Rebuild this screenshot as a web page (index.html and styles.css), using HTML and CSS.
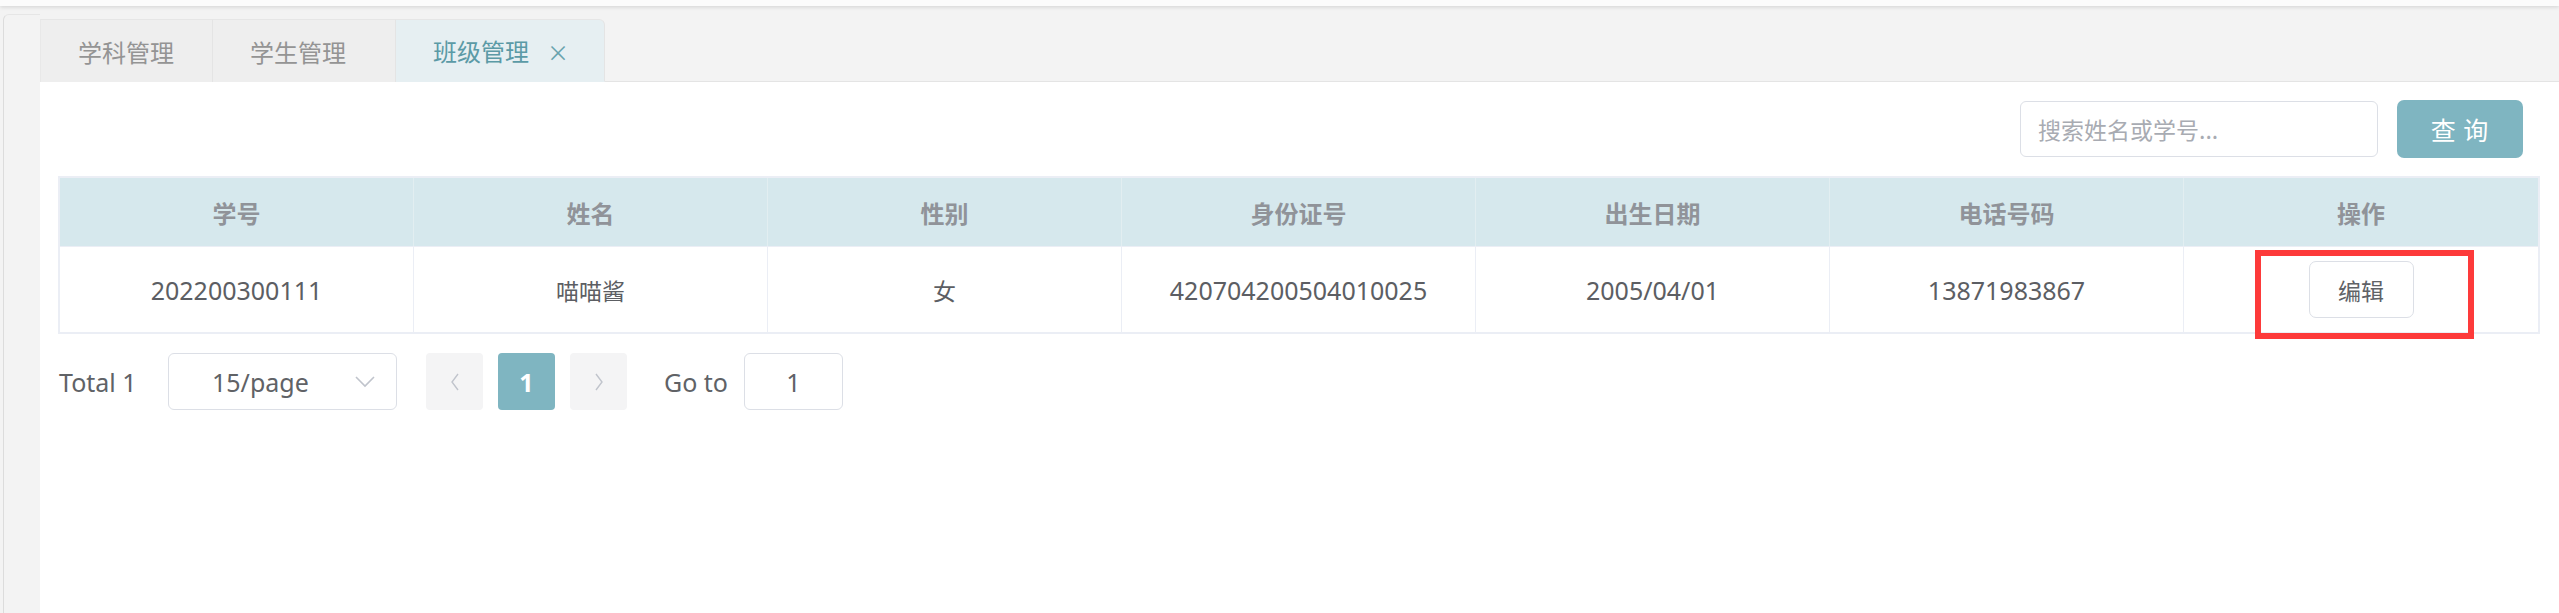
FILE: index.html
```html
<!DOCTYPE html>
<html lang="zh-CN">
<head>
<meta charset="utf-8">
<title>班级管理</title>
<link rel="stylesheet" href="styles.css">
</head>
<body>
<div class="topbar"></div>
<div class="layout">
  <aside class="side"></aside>
  <main class="main">
    <nav class="tabs">
      <div class="tab">学科管理</div>
      <div class="tab">学生管理</div>
      <div class="tab active">班级管理<span class="close">×</span></div>
    </nav>
    <section class="content">
      <div class="toolbar">
        <div class="search">搜索姓名或学号...</div>
        <button class="query">查 询</button>
      </div>
      <div class="table">
        <div class="row head">
          <div class="cell">学号</div>
          <div class="cell">姓名</div>
          <div class="cell">性别</div>
          <div class="cell">身份证号</div>
          <div class="cell">出生日期</div>
          <div class="cell">电话号码</div>
          <div class="cell">操作</div>
        </div>
        <div class="row body">
          <div class="cell">202200300111</div>
          <div class="cell cjk">喵喵酱</div>
          <div class="cell cjk">女</div>
          <div class="cell">420704200504010025</div>
          <div class="cell">2005/04/01</div>
          <div class="cell">13871983867</div>
          <div class="cell op"><span class="edit">编辑</span><span class="mark"></span></div>
        </div>
      </div>
      <div class="pager">
        <span class="total">Total 1</span>
        <div class="sizes"><span>15/page</span>
          <svg class="chev" width="22" height="14" viewBox="0 0 22 14"><path d="M2 2 L11 11 L20 2" fill="none" stroke="#c0c4cc" stroke-width="1.6"/></svg>
        </div>
        <div class="pbtn"><svg width="12" height="20" viewBox="0 0 12 20"><path d="M9 2 L3 10 L9 18" fill="none" stroke="#c0c4cc" stroke-width="1.4"/></svg></div>
        <div class="pbtn cur">1</div>
        <div class="pbtn"><svg width="12" height="20" viewBox="0 0 12 20"><path d="M3 2 L9 10 L3 18" fill="none" stroke="#c0c4cc" stroke-width="1.4"/></svg></div>
        <span class="goto">Go to</span>
        <div class="jump">1</div>
      </div>
    </section>
  </main>
</div>
</body>
</html>
```

FILE: styles.css
```css
* { box-sizing: border-box; }
html, body { margin: 0; padding: 0; }
body {
  width: 2559px;
  height: 613px;
  overflow: hidden;
  background: #ffffff;
  font-family: "Noto Sans", "Noto Sans CJK SC", sans-serif;
  color: #606266;
}
.topbar {
  height: 6px;
  background: #fbfbfb;
  box-shadow: 0 1px 4px rgba(0,0,0,0.14);
  position: relative;
  z-index: 2;
}
.layout {
  display: flex;
  height: 607px;
  background: #f3f3f3;
}
.side {
  width: 37px;
  flex: none;
  margin-left: 3px;
  margin-top: 8px;
  border-left: 1px solid #dcdcdc;
  border-top: 1px solid #e6e6e6;
  border-top-left-radius: 6px;
  background: #f3f3f3;
}
.main {
  flex: 1;
  display: flex;
  flex-direction: column;
}
.tabs {
  display: flex;
  align-items: flex-end;
  height: 76px;
  padding-top: 13px;
  border-bottom: 1px solid #e4e4e4;
  background: #f3f3f3;
}
.tab {
  flex: none;
  white-space: nowrap;
  height: 63px;
  margin-bottom: -1px;
  padding: 0 0 0 37px;
  display: flex;
  align-items: center;
  font-family: "Noto Sans CJK SC", sans-serif;
  font-size: 24px;
  color: #949494;
  background: #eeeeee;
  border-top: 1px solid #e6e6e6;
  border-right: 1px solid #e4e4e4;
}
.tab:first-child { border-left: 1px solid #e8e8e8; width: 173px; }
.tab:nth-child(2) { width: 183px; }
.tab.active {
  width: 209px;
  background: #e6eff2;
  color: #5b9aa6;
  border-top-right-radius: 6px;
  border-bottom: 1px solid #e6eff2;
}
.close {
  font-size: 22px;
  margin-left: 18px;
  color: #6aa3ae;
}
.content {
  flex: 1;
  background: #fff;
  padding: 18px 19px 0 18px;
}
.toolbar {
  display: flex;
  justify-content: flex-end;
  align-items: center;
  padding-right: 17px;
  height: 58px;
}
.search {
  width: 358px;
  height: 56px;
  border: 1.5px solid #dcdfe6;
  border-radius: 6px;
  padding-left: 17px;
  display: flex;
  align-items: center;
  font-family: "Noto Sans CJK SC", sans-serif;
  font-size: 23px;
  color: #a8abb2;
}
.query {
  margin-left: 19px;
  width: 126px;
  height: 58px;
  border: none;
  border-radius: 7px;
  background: #7fb5c1;
  color: #fff;
  font-family: "Noto Sans CJK SC", sans-serif;
  font-size: 25px;
  letter-spacing: 1px;
}
.table {
  margin-top: 18px;
  border: 2px solid #ebeef5;
}
.row {
  display: grid;
  grid-template-columns: repeat(7, 1fr);
}
.cell {
  display: flex;
  align-items: center;
  justify-content: center;
  border-right: 1px solid #ebeef5;
}
.cell:last-child { border-right: none; }
.head { height: 68px; background: #d6e8ed; }
.head .cell {
  font-family: "Noto Sans CJK SC", sans-serif;
  font-size: 24px;
  font-weight: 700;
  color: #909399;
  border-right-color: #e2eef1;
}
.body { height: 86px; border-top: 1px solid #ebeef5; }
.body .cell { font-size: 25px; color: #5c5e63; }
.body .cell.cjk { font-family: "Noto Sans CJK SC", sans-serif; font-size: 23px; }
.op { position: relative; }
.edit {
  width: 105px;
  height: 57px;
  border: 1.5px solid #dcdfe6;
  border-radius: 7px;
  display: flex;
  align-items: center;
  justify-content: center;
  font-family: "Noto Sans CJK SC", sans-serif;
  font-size: 23px;
  color: #606266;
}
.mark {
  position: absolute;
  left: 71px;
  top: 3px;
  width: 219px;
  height: 89px;
  border: 6px solid #fd3a3a;
}
.pager {
  display: flex;
  align-items: center;
  margin-top: 19px;
  height: 57px;
  font-size: 25px;
  color: #606266;
}
.total { margin-left: 1px; width: 109px; }
.sizes {
  width: 229px;
  height: 57px;
  border: 1.5px solid #dcdfe6;
  border-radius: 6px;
  display: flex;
  align-items: center;
  padding-left: 43px;
  padding-right: 20px;
  justify-content: space-between;
  margin-right: 29px;
}
.pbtn {
  width: 57px;
  height: 57px;
  border-radius: 4px;
  background: #f4f4f5;
  display: flex;
  align-items: center;
  justify-content: center;
  margin-right: 15px;
}
.pbtn.cur {
  background: #7fb5c1;
  color: #fff;
  font-weight: 700;
}
.goto { margin-left: 22px; margin-right: 16px; }
.jump {
  width: 99px;
  height: 57px;
  border: 1.5px solid #dcdfe6;
  border-radius: 6px;
  display: flex;
  align-items: center;
  justify-content: center;
}
```
